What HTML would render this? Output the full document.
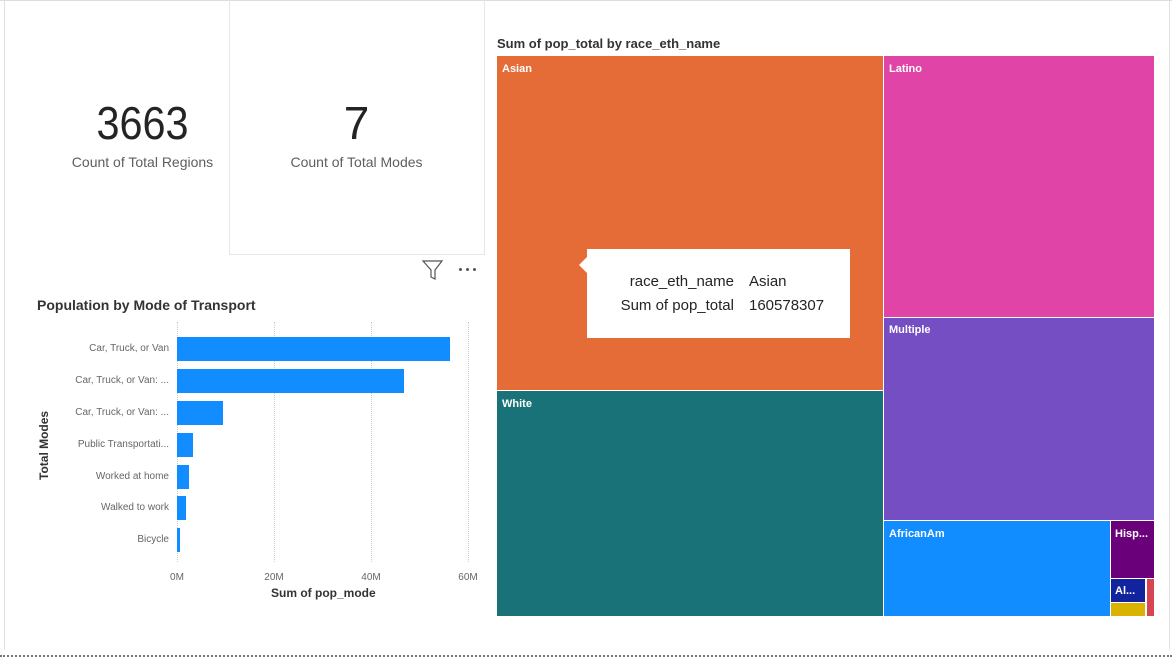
<!DOCTYPE html>
<html><head><style>
body{margin:0;width:1172px;height:657px;background:#fff;position:relative;overflow:hidden;font-family:"Liberation Sans",sans-serif;}
.a{position:absolute}
.t{position:absolute;color:#fff;font-size:11px;font-weight:bold}
.lbl{position:absolute;right:1003px;font-size:10px;color:#666;text-align:right;white-space:nowrap}
.bar{position:absolute;left:177px;height:24px;background:#118dff}
.grid{position:absolute;top:322px;height:240px;border-left:1px dotted #ccc}
.tick{position:absolute;top:572px;font-size:10px;color:#666;transform:translateX(-50%)}
.dot{position:absolute;top:268px;width:3px;height:3px;border-radius:50%;background:#555}
</style></head><body>
<div class="a" style="left:0;top:0;width:1172px;height:1px;background:#ddd"></div>
<div class="a" style="left:4px;top:0;width:1px;height:650px;background:#e0e0e0"></div>
<div class="a" style="left:1169px;top:0;width:1px;height:650px;background:#e0e0e0"></div>
<div class="a" style="left:0;top:655px;width:1172px;border-top:2px dotted #777"></div>
<div class="a" style="left:229px;top:-1px;width:254px;height:254px;border:1px solid #e6e6e6"></div>
<div class="a" style="left:40px;top:96px;width:205px;text-align:center;font-size:46px;color:#252423;transform:scaleX(0.9)">3663</div>
<div class="a" style="left:40px;top:154px;width:205px;text-align:center;font-size:14px;color:#605e5c">Count of Total Regions</div>
<div class="a" style="left:254px;top:96px;width:205px;text-align:center;font-size:46px;color:#252423">7</div>
<div class="a" style="left:254px;top:154px;width:205px;text-align:center;font-size:14px;color:#605e5c">Count of Total Modes</div>
<svg class="a" style="left:422px;top:260px" width="22" height="20"><path d="M1 1H20L13 10V19L9 17V10Z" fill="none" stroke="#555" stroke-width="1.2"/></svg>
<div class="dot" style="left:459px"></div><div class="dot" style="left:466px"></div><div class="dot" style="left:473px"></div>
<div class="a" style="left:37px;top:297px;font-size:14px;font-weight:bold;color:#333">Population by Mode of Transport</div>
<div class="a" style="left:37px;top:480px;font-size:12px;color:#333;transform:rotate(-90deg);transform-origin:left top;font-weight:bold">Total Modes</div>
<div class="grid" style="left:177px"></div><div class="grid" style="left:274px"></div><div class="grid" style="left:371px"></div><div class="grid" style="left:468px"></div>
<div class="bar" style="top:337px;width:273px"></div>
<div class="bar" style="top:369px;width:227px"></div>
<div class="bar" style="top:401px;width:46px"></div>
<div class="bar" style="top:433px;width:16px"></div>
<div class="bar" style="top:465px;width:12px"></div>
<div class="bar" style="top:496px;width:9px"></div>
<div class="bar" style="top:528px;width:3px"></div>
<div class="lbl" style="top:343px">Car, Truck, or Van</div>
<div class="lbl" style="top:375px">Car, Truck, or Van: ...</div>
<div class="lbl" style="top:407px">Car, Truck, or Van: ...</div>
<div class="lbl" style="top:439px">Public Transportati...</div>
<div class="lbl" style="top:471px">Worked at home</div>
<div class="lbl" style="top:502px">Walked to work</div>
<div class="lbl" style="top:534px">Bicycle</div>
<div class="tick" style="left:177px">0M</div><div class="tick" style="left:274px">20M</div><div class="tick" style="left:371px">40M</div><div class="tick" style="left:468px">60M</div>
<div class="a" style="left:271px;top:586px;font-size:12px;color:#333;font-weight:bold">Sum of pop_mode</div>
<div class="a" style="left:497px;top:36px;font-size:13px;color:#333;font-weight:bold">Sum of pop_total by race_eth_name</div>
<div class="a" style="left:497px;top:56px;width:386px;height:334px;background:#e66c37"></div>
<div class="a" style="left:497px;top:391px;width:386px;height:225px;background:#197278"></div>
<div class="a" style="left:884px;top:56px;width:270px;height:261px;background:#e044a7"></div>
<div class="a" style="left:884px;top:318px;width:270px;height:202px;background:#744ec2"></div>
<div class="a" style="left:884px;top:521px;width:226px;height:95px;background:#118dff"></div>
<div class="a" style="left:1111px;top:521px;width:43px;height:57px;background:#6b007b"></div>
<div class="a" style="left:1111px;top:579px;width:34px;height:23px;background:#12239e"></div>
<div class="a" style="left:1111px;top:603px;width:34px;height:13px;background:#d9b300"></div>
<div class="a" style="left:1147px;top:579px;width:7px;height:37px;background:#d64550"></div>
<div class="t" style="left:502px;top:63px">Asian</div>
<div class="t" style="left:502px;top:398px">White</div>
<div class="t" style="left:889px;top:63px">Latino</div>
<div class="t" style="left:889px;top:324px">Multiple</div>
<div class="t" style="left:889px;top:528px">AfricanAm</div>
<div class="t" style="left:1115px;top:528px">Hisp...</div>
<div class="t" style="left:1115px;top:585px">Al...</div>
<div class="a" style="left:587px;top:249px;width:263px;height:89px;background:#fff"></div>
<div class="a" style="left:579px;top:257px;width:0;height:0;border:8px solid transparent;border-right-color:#fff;border-left:0"></div>
<div class="a" style="left:587px;top:270px;width:147px;text-align:right;font-size:15px;color:#252423;line-height:24px">race_eth_name<br>Sum of pop_total</div>
<div class="a" style="left:749px;top:270px;font-size:15px;color:#252423;line-height:24px">Asian<br>160578307</div>
</body></html>
